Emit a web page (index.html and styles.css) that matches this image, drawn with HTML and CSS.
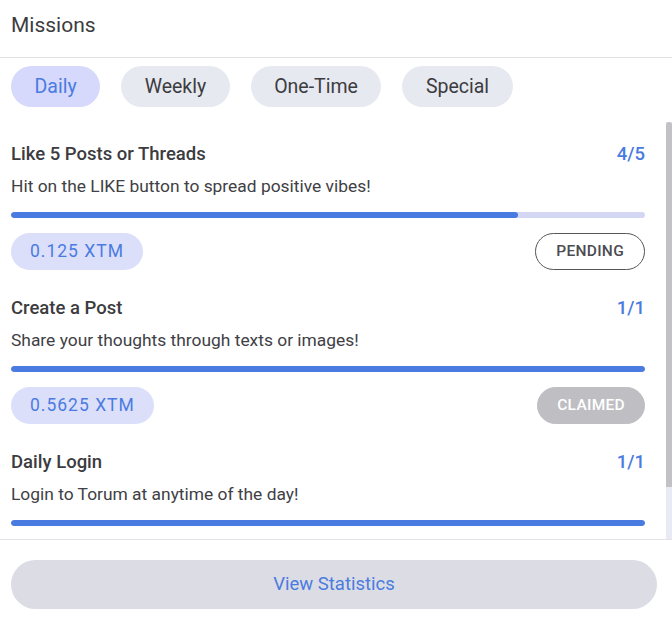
FILE: index.html
```html
<!DOCTYPE html>
<html>
<head>
<meta charset="utf-8">
<link rel="stylesheet" href="styles.css">
</head>
<body>
<div class="panel">
  <div class="header">Missions</div>
  <div class="tabs">
    <div class="tab active">Daily</div>
    <div class="tab">Weekly</div>
    <div class="tab">One-Time</div>
    <div class="tab">Special</div>
  </div>
  <div class="scroll">
    <div class="list">
      <div class="mission">
        <div class="row">
          <div class="title">Like 5 Posts or Threads</div>
          <div class="count">4/5</div>
        </div>
        <div class="desc">Hit on the LIKE button to spread positive vibes!</div>
        <div class="bar"><div class="fill" style="width:80%"></div></div>
        <div class="row">
          <div class="reward">0.125 XTM</div>
          <div class="status pending">PENDING</div>
        </div>
      </div>
      <div class="mission">
        <div class="row">
          <div class="title">Create a Post</div>
          <div class="count">1/1</div>
        </div>
        <div class="desc">Share your thoughts through texts or images!</div>
        <div class="bar"><div class="fill" style="width:100%"></div></div>
        <div class="row">
          <div class="reward">0.5625 XTM</div>
          <div class="status claimed">CLAIMED</div>
        </div>
      </div>
      <div class="mission">
        <div class="row">
          <div class="title">Daily Login</div>
          <div class="count">1/1</div>
        </div>
        <div class="desc">Login to Torum at anytime of the day!</div>
        <div class="bar"><div class="fill" style="width:100%"></div></div>
      </div>
    </div>
    <div class="scrollbar"><div class="thumb"></div></div>
  </div>
  <div class="footer">
    <div class="stats-btn">View Statistics</div>
  </div>
</div>
</body>
</html>
```
FILE: styles.css
```css
* { box-sizing: border-box; }
html, body { margin: 0; padding: 0; background: #fff; }
body {
  font-family: Roboto, "Noto Sans", sans-serif;
  width: 672px;
  height: 621px;
  overflow: hidden;
}
.panel { display: flex; flex-direction: column; }
.header {
  height: 58px;
  padding: 11px 11px 0;
  font-size: 21px;
  line-height: 28px;
  color: #3c3c40;
  border-bottom: 1px solid #dfdfe4;
}
.tabs {
  display: flex;
  gap: 21px;
  padding: 8px 11px 8px;
}
.tab {
  height: 41px;
  padding: 0 23.5px;
  border-radius: 21px;
  background: #e6e9f0;
  color: #3c3c40;
  font-size: 19.5px;
  line-height: 41px;
}
.tab.active {
  background: #d6d9fb;
  color: #4a7be0;
}
.scroll {
  display: flex;
  height: 425px;
  border-bottom: 1px solid #e2e2e8;
}
.list {
  flex: 1;
  padding: 27px 21px 0 11px;
  overflow: hidden;
}
.mission { margin-bottom: 26px; }
.row {
  display: flex;
  justify-content: space-between;
  align-items: center;
}
.title {
  font-size: 18.5px;
  line-height: 24px;
  font-weight: 500;
  color: #3c3c40;
}
.count {
  font-size: 18.5px;
  line-height: 24px;
  font-weight: 500;
  color: #4a7be0;
}
.desc {
  margin-top: 8px;
  font-size: 17.4px;
  line-height: 24px;
  color: #404045;
}
.bar {
  margin: 14px 0 15px;
  height: 6px;
  border-radius: 3px;
  background: #d3d7f3;
  overflow: hidden;
}
.fill {
  height: 100%;
  background: #4a7be0;
  border-radius: 3px;
}
.reward {
  height: 37px;
  padding: 0 19px;
  border-radius: 19px;
  background: #dcdffa;
  color: #4a7be0;
  font-size: 17.5px;
  letter-spacing: 1px;
  line-height: 37px;
}
.status {
  height: 37px;
  border-radius: 19px;
  font-size: 15.5px;
  font-weight: 500;
  line-height: 35px;
  letter-spacing: 0.3px;
}
.status.pending {
  padding: 0 20px;
  border: 1px solid #55555a;
  color: #4c4c52;
}
.status.claimed {
  padding: 0 19px;
  border: 1px solid #bebec3;
  background: #bebec3;
  color: #fff;
}
.scrollbar {
  width: 6px;
  margin-top: 7px;
  background: #e9ebf4;
}
.thumb {
  height: 365px;
  background: #c1c1c6;
  border-radius: 3px 3px 0 0;
}
.footer {
  padding: 20px 15px 0 11px;
}
.stats-btn {
  height: 49px;
  border-radius: 25px;
  background: #dcdde4;
  color: #4a7be0;
  font-size: 18.5px;
  line-height: 49px;
  text-align: center;
}
```
